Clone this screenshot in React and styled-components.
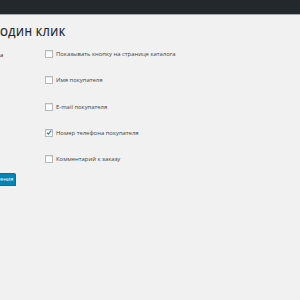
import React from "react";
import styled, { createGlobalStyle } from "styled-components";

const Global = createGlobalStyle`
  html, body { margin: 0; padding: 0; background: #f1f1f1; }
  body { font-family: "Open Sans", "Liberation Sans", sans-serif; color: #444; }
`;

const AdminBar = styled.div`
  height: 14px;
  background: #23282d;
  border-bottom: 1px solid #a7aaad;
`;

const Wrap = styled.div`
  padding-top: 11px;
`;

const Title = styled.h1`
  margin: 0;
  font-size: 10px;
  line-height: 12px;
  font-weight: 600;
  letter-spacing: 0.5px;
  color: #23282d;
  text-transform: uppercase;
`;

const Form = styled.div`
  display: grid;
  grid-template-columns: 45px 1fr;
  margin-top: 12px;
`;

const Th = styled.div`
  font-size: 5.9px;
  line-height: 8px;
  color: #23282d;
  padding-top: 1px;
`;

const Fields = styled.div`
  display: flex;
  flex-direction: column;
  gap: 18.3px;
`;

const Row = styled.label`
  display: flex;
  align-items: center;
  gap: 3px;
  height: 8px;
  font-size: 5.9px;
  color: #444;
  white-space: nowrap;
`;

const Box = styled.span`
  box-sizing: border-box;
  width: 8px;
  height: 8px;
  border: 1px solid #b4b9be;
  background: #fff;
  box-shadow: inset 0 1px 1px rgba(0,0,0,0.1);
  display: flex;
  align-items: center;
  justify-content: center;
`;

const Button = styled.button`
  margin-top: 10px;
  height: 13px;
  padding: 0 2px 0 0;
  border: 1px solid #0073aa;
  border-left: none;
  border-radius: 0 2px 2px 0;
  background: #0085ba;
  box-shadow: 0 1px 0 #006799;
  color: #fff;
  font-family: "Open Sans", "Liberation Sans", sans-serif;
  font-size: 5.6px;
  line-height: 11px;
  display: block;
`;

const Check = () => (
  <svg width="7" height="7" viewBox="0 0 10 10">
    <path d="M1.5 5.2 L4 7.6 L8.6 2" fill="none" stroke="#1e8cbe" strokeWidth="2" />
  </svg>
);

const items = [
  ["Показывать кнопку на странице каталога", false],
  ["Имя покупателя", false],
  ["E-mail покупателя", false],
  ["Номер телефона покупателя", true],
  ["Комментарий к заказу", false],
];

export default function App() {
  return (
    <>
      <Global />
      <AdminBar />
      <Wrap>
        <Title>один клик</Title>
        <Form>
          <Th>а</Th>
          <Fields>
            {items.map(([t, c]) => (
              <Row key={t}>
                <Box>{c && <Check />}</Box>
                {t}
              </Row>
            ))}
          </Fields>
        </Form>
        <Button>ения</Button>
      </Wrap>
    </>
  );
}
